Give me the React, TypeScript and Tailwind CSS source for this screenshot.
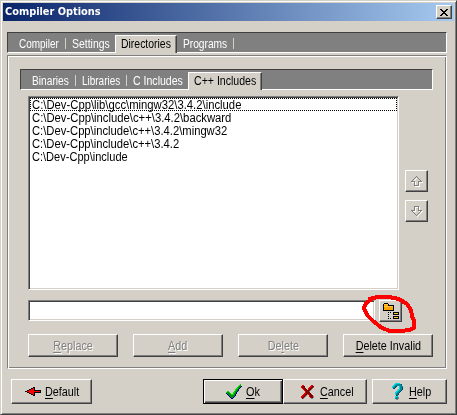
import type { ReactNode } from "react";

const RAISED =
  "border border-t-white border-l-white border-r-[#404040] border-b-[#404040] bg-[#d4d0c8] shadow-[inset_-1px_-1px_0_#808080]";
const SUNKEN =
  "border border-t-[#808080] border-l-[#808080] border-r-white border-b-white bg-white shadow-[inset_1px_1px_0_#404040,inset_-1px_-1px_0_#d4d0c8]";
const STRIP =
  "flex h-[21px] border border-t-[#404040] border-l-[#404040] border-r-white border-b-white bg-[#808080] text-white";
const ACTIVE_TAB =
  "mt-[2px] -mb-px h-[18px] border border-b-0 border-t-white border-l-white border-r-[#404040] bg-[#d4d0c8] text-black shadow-[inset_-1px_0_0_#808080]";
const DISABLED = "text-[#808080] [text-shadow:1px_1px_0_#fff]";

type PixelProps = { rows: string[]; colors: Record<string, string>; embossed?: boolean };

function Pixels({ rows, colors, embossed = false }: PixelProps) {
  const w = Math.max(...rows.map((r) => r.length));
  const draw = (offset: number, fill?: string) =>
    rows.flatMap((row, y) =>
      [...row].map((c, x) =>
        colors[c] ? (
          <rect key={`${offset}-${x}-${y}`} x={x + offset} y={y + offset} width={1} height={1} fill={fill ?? colors[c]} />
        ) : null,
      ),
    );
  return (
    <svg width={w} height={rows.length} shapeRendering="crispEdges" className="block shrink-0 overflow-visible">
      {embossed && draw(1, "#fff")}
      {draw(0)}
    </svg>
  );
}

const UP = [
  ".....g.....",
  "....g.g....",
  "...g...g...",
  "..g.....g..",
  ".g.......g.",
  "gggg...gggg",
  "...g...g...",
  "...g...g...",
  "...g...g...",
  "...ggggg...",
];
const DOWN = [...UP].reverse();
const LEFT = [
  "........kk......",
  "......kkrk......",
  "....kkrrrk......",
  "..kkrrrrrkkkkkkk",
  "kkrrrrrrrrrrrrrk",
  "..kkrrrrrkkkkkkk",
  "....kkrrrk......",
  "......kkrk......",
  "........kk......",
];
const FOLDER = [
  ".kkkk...........",
  "kyyyyk..........",
  "kooookkkkkk.....",
  "kyyyyyyyyyk.....",
  "koooooooook.....",
  "koooooooook.....",
  "koooooooook.....",
  "kkkkkkkkkkk.....",
  "................",
  ".....k.k..kkkkkk",
  "..........kyyyyk",
  ".....k....kkkkkk",
  "................",
  ".....k....kkkkkk",
  "..........kyyyyk",
  ".....k.k..kkkkkk",
];
const CHECK = [
  "..............l.",
  ".............lg.",
  "............lggn",
  "...........lggn.",
  "..........llgn..",
  ".........llgn...",
  ".........lggn...",
  ".ll.....lggn....",
  "lggl...llgn.....",
  "ngggl..lggn.....",
  ".nggglllgn......",
  "..nggggggn......",
  "...nggggn.......",
  "....nggn........",
  ".....nn.........",
];
const CROSS = [
  ".rr.......rr.",
  "rrdd.....rrdd",
  "rddd....rrddg",
  ".rddd..rrddg.",
  "..rddd.rddg..",
  "...rdddddg...",
  "....rdddg....",
  "....rdddd....",
  "...rrddddd...",
  "..rrddgrddd..",
  ".rrddg..rddd.",
  "rrddg...rdddg",
  "rddg.....rddg",
  ".dg.......gg.",
];
const QUESTION = [
  "...ccccc...",
  "..cctttttn.",
  ".ccttttttt.",
  "cctnn..cttt",
  "cttn...cttn",
  ".nn....cttn",
  "......ccttn",
  ".....ccttn.",
  "....ccttn..",
  "...ccttn...",
  "...cttn....",
  "...cttn....",
  "....nn.....",
  "...ccc.....",
  "...cttg....",
  "...tttg....",
  "....gg.....",
];
const CLOSE = ["kk....kk", ".kk..kk.", "..kkkk..", "...kk...", "..kkkk..", ".kk..kk.", "kk....kk"];

const PATHS = [
  { text: "C:\\Dev-Cpp\\lib\\gcc\\mingw32\\3.4.2\\include", scale: "scale-x-[0.94]" },
  { text: "C:\\Dev-Cpp\\include\\c++\\3.4.2\\backward", scale: "scale-x-[0.94]" },
  { text: "C:\\Dev-Cpp\\include\\c++\\3.4.2\\mingw32", scale: "scale-x-[0.935]" },
  { text: "C:\\Dev-Cpp\\include\\c++\\3.4.2", scale: "scale-x-[0.935]" },
  { text: "C:\\Dev-Cpp\\include", scale: "scale-x-[0.92]" },
];

function Label({ children, className }: { children: ReactNode; className: string }) {
  return (
    <span className={`block whitespace-nowrap text-[12px] leading-[14px] ${className}`}>{children}</span>
  );
}

function Separator({ className }: { className: string }) {
  return <span className={`h-[11px] w-px shrink-0 bg-[#d4d0c8] ${className}`} />;
}

function Key({ children }: { children: string }) {
  return <span className="underline decoration-1 underline-offset-[1.5px]">{children}</span>;
}

function Push({ children, className = "" }: { children: ReactNode; className?: string }) {
  return (
    <button className={`flex h-[23px] w-[90px] items-center justify-center ${RAISED} ${className}`}>
      <Label className="scale-x-[0.9]">{children}</Label>
    </button>
  );
}

export default function App() {
  return (
    <div className="relative h-[415px] w-[457px] overflow-hidden border border-t-[#d4d0c8] border-l-[#d4d0c8] border-r-[#404040] border-b-[#404040] bg-[#d4d0c8] p-[2px] font-['Liberation_Sans',Arial,sans-serif] text-black shadow-[inset_1px_1px_0_#fff,inset_-1px_-1px_0_#808080]">
      <header className="flex h-[18px] w-[451px] items-center justify-between bg-linear-to-r/srgb from-[#0a246a] to-[#a6caf0] px-[2px]">
        <span className="origin-left scale-x-[0.99] font-['DejaVu_Sans_Condensed','DejaVu_Sans',sans-serif] text-[11px] leading-[18px] font-bold text-white">
          Compiler Options
        </span>
        <button className={`flex h-[14px] w-[16px] items-center justify-center ${RAISED}`}>
          <Pixels rows={CLOSE} colors={{ k: "#000" }} />
        </button>
      </header>

      <main className="px-[4px] pt-[11px]">
        <nav className={`w-[440px] ${STRIP}`}>
          <Label className="ml-[11px] w-[46px] origin-left scale-x-[0.83] pt-[4px]">Compiler</Label>
          <Separator className="mt-[5px]" />
          <Label className="ml-[6px] w-[43px] origin-left scale-x-[0.87] pt-[4px]">Settings</Label>
          <div className={`w-[62px] pt-px pl-[5px] ${ACTIVE_TAB}`}>
            <Label className="origin-left scale-x-[0.87]">Directories</Label>
          </div>
          <Label className="ml-[6px] w-[50px] origin-left scale-x-[0.85] pt-[4px]">Programs</Label>
          <Separator className="mt-[5px]" />
        </nav>

        <section className="mt-[2px] h-[314px] w-[440px] border border-t-[#808080] border-l-[#808080] border-r-white border-b-white px-[12px] pt-[13px] shadow-[inset_1px_1px_0_#fff,inset_-1px_-1px_0_#808080]">
          <nav className={`w-[413px] ${STRIP}`}>
            <Label className="ml-[11px] w-[43px] origin-left scale-x-[0.85] pt-[4px]">Binaries</Label>
            <Separator className="mt-[5px]" />
            <Label className="ml-[6px] w-[44px] origin-left scale-x-[0.83] pt-[4px]">Libraries</Label>
            <Separator className="mt-[5px]" />
            <Label className="ml-[6px] w-[55px] origin-left scale-x-[0.88] pt-[4px]">C Includes</Label>
            <div className={`w-[74px] pt-px pl-[5px] ${ACTIVE_TAB}`}>
              <Label className="origin-left scale-x-[0.88]">C++ Includes</Label>
            </div>
          </nav>

          <div className="mt-[6px] ml-[8px] flex">
            <div className={`h-[194px] w-[371px] p-px ${SUNKEN}`}>
              {PATHS.map(({ text, scale }, i) => (
                <div
                  key={text}
                  className={`h-[13px] border ${i === 0 ? "border-dotted border-black" : "border-transparent"}`}
                >
                  <Label className={`-mt-px ml-px origin-left ${scale}`}>{text}</Label>
                </div>
              ))}
            </div>
            <div className="ml-[6px] flex flex-col gap-[8px] pt-[74px]">
              {[UP, DOWN].map((rows, i) => (
                <button key={i} className={`flex h-[22px] w-[23px] items-center justify-center ${RAISED}`}>
                  <Pixels rows={rows} colors={{ g: "#808080" }} embossed />
                </button>
              ))}
            </div>
          </div>

          <div className="mt-[10px] ml-[8px] flex gap-[4px]">
            <input className={`h-[21px] w-[347px] ${SUNKEN}`} />
            <button className={`flex h-[22px] w-[23px] pt-[2px] pl-[3px] ${RAISED}`}>
              <Pixels rows={FOLDER} colors={{ k: "#000", o: "#ffa400", y: "#ffc840" }} />
            </button>
          </div>

          <div className="mt-[12px] ml-[8px] flex gap-[15px]">
            <Push className={DISABLED}>
              <Key>R</Key>eplace
            </Push>
            <Push className={DISABLED}>
              <Key>A</Key>dd
            </Push>
            <Push className={DISABLED}>
              De<Key>l</Key>ete
            </Push>
            <Push>
              <Key>D</Key>elete Invalid
            </Push>
          </div>
        </section>

        <footer className="mt-[10px] ml-[4px] flex">
          <button className={`flex h-[25px] w-[81px] items-center pl-[13px] ${RAISED}`}>
            <Pixels rows={LEFT} colors={{ k: "#000", r: "#f00" }} />
            <Label className="ml-[4px] origin-left scale-x-[0.9]">
              <Key>D</Key>efault
            </Label>
          </button>
          <button className="ml-[111px] flex h-[25px] w-[80px] items-center border border-black bg-[#d4d0c8] pl-[22px] shadow-[inset_1px_1px_0_#fff,inset_-1px_-1px_0_#404040,inset_-2px_-2px_0_#808080]">
            <Pixels rows={CHECK} colors={{ l: "#00e000", g: "#008c10", n: "#000080" }} />
            <Label className="ml-[4px] origin-left scale-x-[0.91]">
              <Key>O</Key>k
            </Label>
          </button>
          <button className={`flex h-[25px] w-[84px] items-center pl-[17px] ${RAISED}`}>
            <Pixels rows={CROSS} colors={{ r: "#e00000", d: "#840000", g: "#808080" }} />
            <Label className="ml-[6px] origin-left scale-x-[0.9]">
              <Key>C</Key>ancel
            </Label>
          </button>
          <button className={`ml-[5px] flex h-[25px] w-[75px] items-center pl-[19px] ${RAISED}`}>
            <Pixels rows={QUESTION} colors={{ c: "#00d8e0", t: "#008c94", n: "#004878", g: "#808080" }} />
            <Label className="ml-[6px] origin-left scale-x-[0.9]">
              <Key>H</Key>elp
            </Label>
          </button>
        </footer>
      </main>

      <svg
        viewBox="360 290 60 48"
        className="pointer-events-none absolute top-[289px] left-[359px] h-[48px] w-[60px]"
        fill="none"
        stroke="#f00"
        strokeWidth="4"
        strokeLinecap="square"
        strokeLinejoin="round"
        shapeRendering="crispEdges"
      >
        <path d="M370 299L377 297L389 297L399 299L407 304L411 310L412 316L414 321L414 328L409 330L401 331L390 331L382 328L373 321L367 315L364 308L366 303L372 299" />
      </svg>
    </div>
  );
}
